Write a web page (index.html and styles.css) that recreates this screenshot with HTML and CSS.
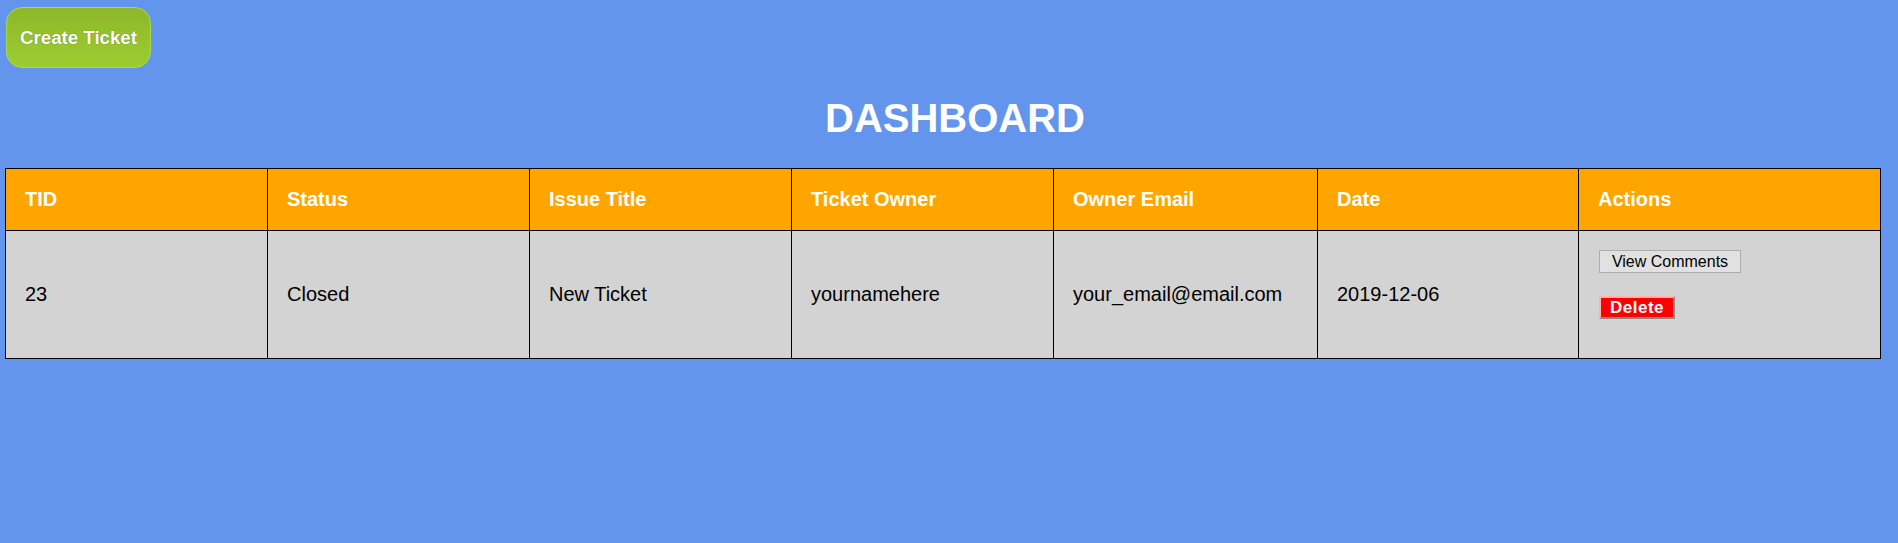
FILE: index.html
```html
<!DOCTYPE html>
<html lang="en">
<head>
<meta charset="utf-8">
<title>Dashboard</title>
<link rel="stylesheet" href="styles.css">
</head>
<body>
<div class="topbar">
  <button class="create-btn">Create Ticket</button>
</div>
<h1 class="title">DASHBOARD</h1>
<table class="tickets">
  <colgroup>
    <col class="c-std"><col class="c-std"><col class="c-std"><col class="c-std"><col class="c-email"><col class="c-date"><col class="c-actions">
  </colgroup>
  <thead>
    <tr>
      <th>TID</th>
      <th>Status</th>
      <th>Issue Title</th>
      <th>Ticket Owner</th>
      <th>Owner Email</th>
      <th>Date</th>
      <th>Actions</th>
    </tr>
  </thead>
  <tbody>
    <tr>
      <td>23</td>
      <td>Closed</td>
      <td>New Ticket</td>
      <td>yournamehere</td>
      <td>your_email@email.com</td>
      <td>2019-12-06</td>
      <td class="actions">
        <div class="action-stack">
          <button class="view-btn">View Comments</button>
          <button class="delete-btn">Delete</button>
        </div>
      </td>
    </tr>
  </tbody>
</table>
</body>
</html>
```
FILE: styles.css
```css
html, body {
  margin: 0;
  padding: 0;
}
body {
  background: #6495ed;
  font-family: "Liberation Sans", Arial, sans-serif;
  padding: 0 5px;
}
.topbar {
  display: flex;
  padding-top: 7px;
  padding-left: 1px;
}
.create-btn {
  font-family: "Liberation Sans", Arial, sans-serif;
  font-size: 18.67px;
  font-weight: bold;
  color: #fff;
  text-shadow: 0 0 1px rgba(60, 80, 20, 0.7);
  background: linear-gradient(to bottom, #8fb72a, #9bcd31);
  border: 1px solid #a8d84e;
  border-radius: 16px;
  width: 145px;
  height: 61px;
  padding: 0;
  margin: 0;
  line-height: 21px;
}
.title {
  margin: 26.8px 0;
  font-size: 40px;
  line-height: 46px;
  font-weight: bold;
  color: #fff;
  text-align: center;
  padding-left: 12px;
}
.tickets {
  border-collapse: collapse;
  table-layout: fixed;
  width: 1875px;
  border: 1px solid #000;
  font-size: 20px;
}
.c-std { width: 262px; }
.c-email { width: 264px; }
.c-date { width: 261px; }
.c-actions { width: 302px; }
.tickets th,
.tickets td {
  border: 1px solid #000;
  padding: 19px 19px;
  text-align: left;
  line-height: 23px;
}
.tickets th {
  background: #ffa500;
  color: #fff;
  font-weight: bold;
}
.tickets td {
  background: #d3d3d3;
  color: #000;
  height: 128px;
  box-sizing: border-box;
  vertical-align: middle;
}
.tickets td.actions {
  vertical-align: top;
  padding: 19px 19px 0 20px;
}
.action-stack {
  display: flex;
  flex-direction: column;
  align-items: flex-start;
  gap: 23px;
}
.view-btn {
  font-family: "Liberation Sans", Arial, sans-serif;
  font-size: 16px;
  line-height: 17px;
  height: 23px;
  width: 142px;
  padding: 0;
  margin: 0;
  background: #e1e1e1;
  color: #000;
  border: 1px solid #adadad;
}
.delete-btn {
  font-family: "Liberation Sans", Arial, sans-serif;
  font-size: 17px;
  font-weight: bold;
  letter-spacing: 0.5px;
  line-height: 17px;
  height: 23px;
  width: 76px;
  padding: 0;
  margin: 0;
  background: #f00;
  color: #fff;
  border: 2px solid;
  border-color: #ffb3b3 #8a8a8a #8a8a8a #ffb3b3;
}
```
